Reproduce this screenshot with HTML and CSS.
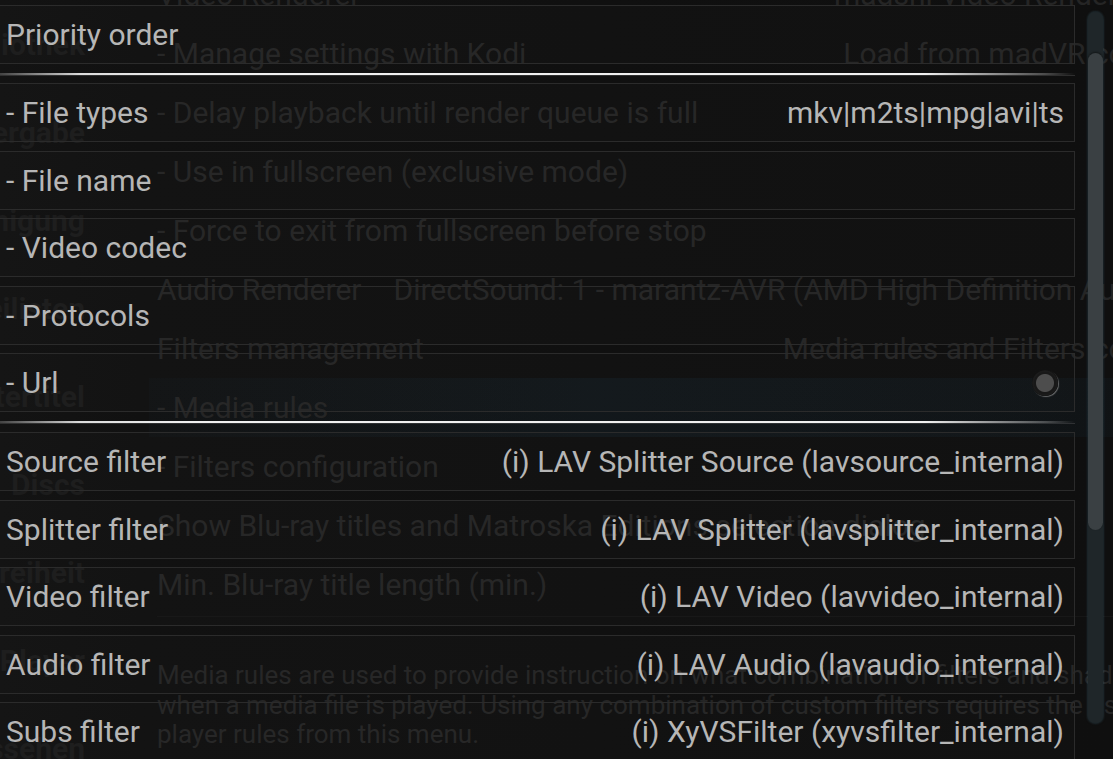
FILE: index.html
```html
<!DOCTYPE html>
<html lang="en">
<head>
<meta charset="utf-8">
<title>Media rules</title>
<link rel="stylesheet" href="styles.css">
</head>
<body>
<div class="screen">
  <div class="backdrop" aria-hidden="true">
    <nav class="side">
      <div class="side-item">Bibliothek</div>
      <div class="side-item">Wiedergabe</div>
      <div class="side-item">Beschleunigung</div>
      <div class="side-item">Dateilisten</div>
      <div class="side-item">Untertitel</div>
      <div class="side-item">Discs</div>
      <div class="side-item">Barrierefreiheit</div>
      <div class="side-item">Player</div>
      <div class="side-item">Aussehen</div>
    </nav>
    <div class="bg-main">
      <div class="bg-list">
        <div class="bg-row"><span>Video Renderer</span><span class="bg-val">madshi Video Renderer (madVR)</span></div>
        <div class="bg-row"><span>- Manage settings with Kodi</span><span class="bg-val">Load from madVR configuration</span></div>
        <div class="bg-row"><span>- Delay playback until render queue is full</span></div>
        <div class="bg-row"><span>- Use in fullscreen (exclusive mode)</span></div>
        <div class="bg-row"><span>- Force to exit from fullscreen before stop</span></div>
        <div class="bg-row"><span>Audio Renderer</span><span class="bg-val bg-clip">DirectSound: 1 - marantz-AVR (AMD High Definition Audio Device)</span></div>
        <div class="bg-row"><span>Filters management</span><span class="bg-val">Media rules and Filters configuration</span></div>
        <div class="bg-row bg-focus"><span>- Media rules</span></div>
        <div class="bg-row"><span>- Filters configuration</span></div>
        <div class="bg-row"><span>Show Blu-ray titles and Matroska Editions selection dialog</span></div>
        <div class="bg-row"><span>Min. Blu-ray title length (min.)</span></div>
      </div>
      <div class="bg-divider"></div>
      <div class="bg-desc">
        <span class="bg-line">Media rules are used to provide instruction on what combination of filters and shaders to use</span>
        <span class="bg-line">when a media file is played. Using any combination of custom filters requires the use of the</span>
        <span class="bg-line">player rules from this menu.</span>
      </div>
    </div>
  </div>

  <div class="dialog">
    <div class="list">
      <div class="row"><span class="label">Priority order</span></div>
      <div class="sep"><div class="sep-line"></div></div>
      <div class="group">
        <div class="row"><span class="label">- File types</span><span class="value">mkv|m2ts|mpg|avi|ts</span></div>
        <div class="row"><span class="label">- File name</span></div>
        <div class="row"><span class="label">- Video codec</span></div>
        <div class="row"><span class="label">- Protocols</span></div>
        <div class="row"><span class="label">- Url</span><span class="radio"></span></div>
      </div>
      <div class="sep sep-b"><div class="sep-line"></div></div>
      <div class="group">
        <div class="row"><span class="label">Source filter</span><span class="value">(i) LAV Splitter Source (lavsource_internal)</span></div>
        <div class="row"><span class="label">Splitter filter</span><span class="value">(i) LAV Splitter (lavsplitter_internal)</span></div>
        <div class="row"><span class="label">Video filter</span><span class="value">(i) LAV Video (lavvideo_internal)</span></div>
        <div class="row"><span class="label">Audio filter</span><span class="value">(i) LAV Audio (lavaudio_internal)</span></div>
        <div class="row"><span class="label">Subs filter</span><span class="value">(i) XyVSFilter (xyvsfilter_internal)</span></div>
      </div>
    </div>
    <div class="scrollbar"><div class="thumb"></div></div>
  </div>
</div>
</body>
</html>
```

FILE: styles.css
```css
* { box-sizing: border-box; }

html, body {
  margin: 0;
  padding: 0;
  background: #0f0f0f;
}

body {
  font-family: Roboto, "Liberation Sans", Arial, sans-serif;
}

.screen {
  position: relative;
  width: 1113px;
  height: 759px;
  overflow: hidden;
  background: linear-gradient(90deg, #131313 0, #111111 140px, #101010 600px, #0f0f0f 100%);
}

/* ---------- faint settings page underneath ---------- */
.backdrop {
  position: absolute;
  inset: 0;
  display: flex;
  color: #252525;
  white-space: nowrap;
}

.side {
  width: 86px;
  flex: none;
  display: flex;
  flex-direction: column;
  padding-right: 1px;
}

.side-item {
  height: 88px;
  flex: none;
  display: flex;
  align-items: center;
  justify-content: flex-end;
  font-size: 30px;
  font-weight: 700;
  color: #1c1c1c;
}

.bg-main {
  margin-left: 71px;
  width: 1112px;
  flex: none;
  display: flex;
  flex-direction: column;
}

.bg-list {
  margin-top: -35px;
  display: flex;
  flex-direction: column;
}

.bg-row {
  height: 59px;
  flex: none;
  display: flex;
  align-items: center;
  font-size: 30px;
}

.bg-val {
  margin-left: auto;
  padding-left: 32px;
}

.bg-clip {
  min-width: 0;
  margin-left: 0;
}

.bg-focus {
  margin-left: -8px;
  padding-left: 8px;
  background: linear-gradient(90deg, rgba(30, 60, 80, 0.06), rgba(30, 70, 95, 0.14) 40%, rgba(30, 70, 95, 0.10) 80%, rgba(30, 70, 95, 0.02));
}

.bg-divider {
  height: 1px;
  margin-top: 2px;
  background: #161616;
}

.bg-desc {
  margin-top: 44px;
  display: flex;
  flex-direction: column;
  font-size: 26px;
  line-height: 29.5px;
}

.bg-line { display: block; }

/* ---------- dialog ---------- */
.dialog {
  position: absolute;
  top: 0;
  left: -10px;
  right: 0;
  bottom: 0;
  display: flex;
  align-items: flex-start;
}

.list {
  width: 1085px;
  flex: none;
  padding-top: 5px;
  display: flex;
  flex-direction: column;
}

.group {
  display: flex;
  flex-direction: column;
  gap: 8.5px;
}

.row {
  height: 59px;
  flex: none;
  display: flex;
  align-items: center;
  justify-content: space-between;
  padding: 0 10px 0 15px;
  border: 1px solid #2b2b2b;
  background: rgba(255, 255, 255, 0.012);
  font-size: 30px;
  color: #b6b6b6;
  white-space: nowrap;
}

.sep {
  height: 19px;
  display: flex;
  align-items: center;
}

.sep-b { height: 20px; }

.sep-line {
  width: 100%;
  height: 2px;
  background: linear-gradient(90deg, rgba(255, 255, 255, 0.12) 0, rgba(255, 255, 255, 0.85) 90px, #f0f0f0 200px, #f0f0f0 calc(100% - 150px), rgba(255, 255, 255, 0.25) calc(100% - 30px), rgba(255, 255, 255, 0) 100%);
  box-shadow: 0 1px 0 rgba(120, 120, 120, 0.3);
}

.radio {
  width: 26px;
  height: 26px;
  margin-right: 6px;
  border-radius: 50%;
  background: radial-gradient(circle, #4d4d4d 0 8.5px, #181818 9.5px 11px, #1c1c1c 11.5px);
  box-shadow: 1px 1px 1px rgba(170, 170, 170, 0.55), inset 0 0 1px rgba(0, 0, 0, 0.8);
}

.scrollbar {
  margin-left: 13px;
  margin-top: 12px;
  width: 15px;
  height: 711px;
  flex: none;
  border-radius: 8px;
  background: #1f2629;
  box-shadow: 0 0 2px 1px rgba(60, 95, 110, 0.35);
  display: flex;
  flex-direction: column;
}

.thumb {
  margin-top: 41px;
  height: 477px;
  border-radius: 8px;
  background: #3a4043;
  box-shadow: 0 -1px 2px rgba(0, 0, 0, 0.45);
}
```
